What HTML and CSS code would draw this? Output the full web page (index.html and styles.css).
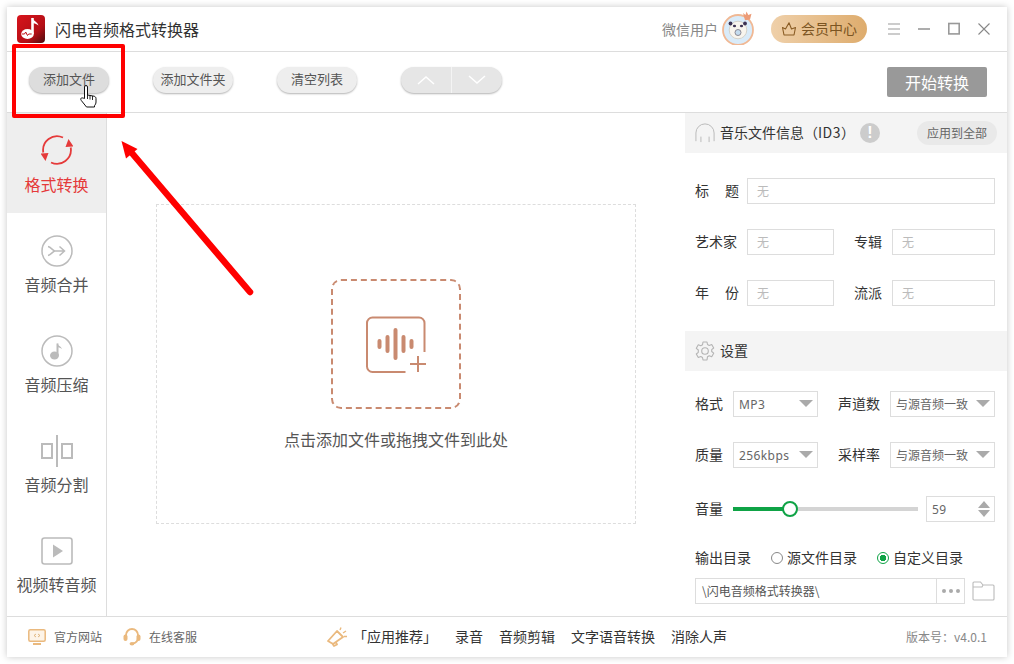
FILE: index.html
```html
<!DOCTYPE html>
<html lang="zh-CN">
<head>
<meta charset="utf-8">
<title>闪电音频格式转换器</title>
<link rel="stylesheet" href="styles.css">
</head>
<body>
<div class="window">
  <header class="titlebar">
    <svg class="logo" viewBox="0 0 28 28">
      <defs><linearGradient id="lg" x1="0" y1="0" x2="1" y2="1"><stop offset="0" stop-color="#d8141c"/><stop offset=".65" stop-color="#b40f16"/><stop offset="1" stop-color="#4a0b0e"/></linearGradient></defs>
      <rect width="28" height="28" rx="4" fill="url(#lg)"/>
      <path d="M15.500 3v16" stroke="#fff" stroke-width="2.600" fill="none"/>
      <path d="M15 2.500c1 3.500 5.500 4 6.500 8-2-1.500-4-2.500-6.500-2.500z" fill="#fff"/>
      <ellipse cx="10.500" cy="19" rx="6.300" ry="5" fill="#fff"/>
      <path d="M5 19h2.500l1.200-2 1.800 3.500 1.200-1.500h3" stroke="#c0121a" stroke-width="1" fill="none"/>
    </svg>
    <h1 class="app-title">闪电音频格式转换器</h1>
    <span class="user-name">微信用户</span>
    <svg class="avatar" viewBox="0 0 34 34">
      <circle cx="16" cy="19" r="15" fill="#d9ebf9" stroke="#f0b894" stroke-width="1.800"/>
      <circle cx="16" cy="19" r="8.800" fill="#f8f5ee" stroke="#cfcabf" stroke-width=".8"/>
      <circle cx="16" cy="21.500" r="3" fill="#c4dcef" stroke="#8d8a94"/>
      <circle cx="8.500" cy="12.500" r="1.900" fill="#3d3353"/>
      <circle cx="23" cy="12.500" r="1.900" fill="#3d3353"/>
      <ellipse cx="12.500" cy="15" rx="1.600" ry="1.200" fill="#3d3353"/>
      <ellipse cx="19.500" cy="15" rx="1.600" ry="1.200" fill="#3d3353"/>
      <path d="M21 2l2.500 2 1-3.500 1.800 3.500 3.200-1.200-1.500 5.700-5 .8z" fill="#ec9c78"/>
    </svg>
    <button class="vip-pill">
      <svg class="vip-icon" viewBox="0 0 16 16"><path d="M1.500 6.500l3 1.500L8 1.800l2.500 6.200 4-1.500-1.500 7.500H3z" fill="none" stroke="#8a5c24" stroke-width="1.100" stroke-linejoin="round"/></svg>
      会员中心
    </button>
    <div class="win-controls">
      <svg class="win-icon" viewBox="0 0 14 14"><path d="M1 2h12M1 7h12M1 12h12" stroke="#999" stroke-width="1.200"/></svg>
      <svg class="win-icon" viewBox="0 0 14 14"><path d="M1 7h12" stroke="#777" stroke-width="1.200"/></svg>
      <svg class="win-icon" viewBox="0 0 14 14"><rect x="1.800" y="1.500" width="10.400" height="10.400" fill="none" stroke="#999" stroke-width="1.600"/></svg>
      <svg class="win-icon" viewBox="0 0 14 14"><path d="M1.500 1.500l11 11M12.500 1.500l-11 11" stroke="#888" stroke-width="1.100"/></svg>
    </div>
  </header>

  <div class="toolbar">
    <button class="tool-btn is-hover">添加文件</button>
    <button class="tool-btn">添加文件夹</button>
    <button class="tool-btn">清空列表</button>
    <div class="order-group">
      <span class="order-cell"><svg class="chev" viewBox="0 0 20 10"><path d="M2 9l8-7 8 7" fill="none" stroke="#fff" stroke-width="1.500"/></svg></span>
      <span class="order-cell"><svg class="chev" viewBox="0 0 20 10"><path d="M2 1l8 7 8-7" fill="none" stroke="#fff" stroke-width="1.500"/></svg></span>
    </div>
    <button class="start-btn">开始转换</button>
  </div>

  <div class="main">
    <nav class="sidebar">
      <div class="nav-item is-active">
        <svg class="nav-icon" viewBox="0 0 32 32">
          <path d="M22 2.500A14 14 0 0 0 2.300 17.500M10 27.500A14 14 0 0 0 29.700 12.500" fill="none" stroke="#e53a3a" stroke-width="1.800"/>
          <path d="M24.500 12l8-.5-5-7.500zM7.500 18l-8 .5 5 7.500z" fill="#e53a3a"/>
        </svg>
        <span class="nav-label">格式转换</span>
      </div>
      <div class="nav-item">
        <svg class="nav-icon" viewBox="0 0 32 32"><circle cx="16" cy="16" r="15" fill="none" stroke="#bbb" stroke-width="1.500"/><path d="M7 11.500C10 12 12 16 14 16M7 20.500C10 20 12 16 14 16H23.500M18.500 11.500L23.500 16l-5 4.500" fill="none" stroke="#bbb" stroke-width="1.500"/></svg>
        <span class="nav-label">音频合并</span>
      </div>
      <div class="nav-item">
        <svg class="nav-icon" viewBox="0 0 32 32"><circle cx="16" cy="16" r="15" fill="none" stroke="#bbb" stroke-width="1.500"/><ellipse cx="13.500" cy="20.500" rx="4.500" ry="4" fill="#bbb"/><path d="M16.500 20V8.500" stroke="#bbb" stroke-width="2"/><path d="M16 8c1 3 4 3 5 6-1.500-1-3-2-5-2z" fill="#bbb"/></svg>
        <span class="nav-label">音频压缩</span>
      </div>
      <div class="nav-item">
        <svg class="nav-icon" viewBox="0 0 32 32"><path d="M16 0v32" stroke="#bbb" stroke-width="2"/><rect x="1" y="9" width="10" height="14" fill="none" stroke="#bbb" stroke-width="2"/><rect x="21" y="9" width="10" height="14" fill="none" stroke="#bbb" stroke-width="2"/></svg>
        <span class="nav-label">音频分割</span>
      </div>
      <div class="nav-item">
        <svg class="nav-icon" viewBox="0 0 32 32"><rect x="1" y="3" width="30" height="26" rx="2.500" fill="none" stroke="#bbb" stroke-width="1.600"/><path d="M12 9.500l10 6.500-10 6.500z" fill="#bbb"/></svg>
        <span class="nav-label">视频转音频</span>
      </div>
    </nav>

    <section class="workspace">
      <div class="dropzone">
        <div class="drop-target">
          <svg class="drop-icon" viewBox="0 0 62 58">
            <path d="M59.500 36V7A5.500 5.500 0 0 0 54 1.500H7.500A5.500 5.500 0 0 0 2 7v43.500A5.500 5.500 0 0 0 7.500 56H40.500" fill="none" stroke="#c98a70" stroke-width="2"/>
            <path d="M53 40v16M45 48h16" stroke="#c98a70" stroke-width="2"/>
            <path d="M14.500 25v6M22.500 21v14M30.500 14v28M38.500 21v14M46.500 25v6" stroke="#c98a70" stroke-width="4" stroke-linecap="round"/>
          </svg>
        </div>
        <p class="drop-text">点击添加文件或拖拽文件到此处</p>
      </div>
    </section>

    <aside class="panel">
      <div class="panel-head">
        <svg class="head-icon" viewBox="0 0 22 22"><path d="M1 20v-9a10 10 0 0 1 20 0v9M6.500 15v6M15.500 15v6" fill="none" stroke="#bbb" stroke-width="1.100"/></svg>
        <span class="head-title">音乐文件信息（<span class="id-tag">ID3</span>）</span>
        <span class="info-badge">!</span>
        <button class="apply-btn">应用到全部</button>
      </div>
      <div class="fields">
        <div class="row">
          <label class="lbl lbl-spread"><span>标</span><span>题</span></label>
          <div class="box box-fill box-hint">无</div>
        </div>
        <div class="row">
          <label class="lbl lbl-wide">艺术家</label>
          <div class="box box-meta box-hint">无</div>
          <label class="lbl lbl-second">专辑</label>
          <div class="box box-fill box-hint">无</div>
        </div>
        <div class="row">
          <label class="lbl lbl-spread"><span>年</span><span>份</span></label>
          <div class="box box-meta box-hint">无</div>
          <label class="lbl lbl-second">流派</label>
          <div class="box box-fill box-hint">无</div>
        </div>
      </div>
      <div class="panel-head">
        <svg class="head-icon" viewBox="0 0 20 20"><path d="M8 1h4l.5 2.500 1.700.9 2.500-.9 2 3.500-2 1.700v1.800l2 1.700-2 3.500-2.500-.9-1.700.9L12 19H8l-.5-2.500-1.700-.9-2.500.9-2-3.500 2-1.700V9L1.300 7.300l2-3.500 2.500.9 1.700-.9z" fill="none" stroke="#b4b4b4" stroke-width="1.100" stroke-linejoin="round"/><circle cx="10" cy="10" r="3.300" fill="none" stroke="#b4b4b4" stroke-width="1.100"/></svg>
        <span class="head-title">设置</span>
      </div>
      <div class="settings">
        <div class="row">
          <label class="lbl">格式</label>
          <div class="box box-select"><span class="val-latin">MP3</span><i class="caret"></i></div>
          <label class="lbl lbl-third">声道数</label>
          <div class="box box-select box-select-wide">与源音频一致<i class="caret"></i></div>
        </div>
        <div class="row">
          <label class="lbl">质量</label>
          <div class="box box-select"><span class="val-latin">256kbps</span><i class="caret"></i></div>
          <label class="lbl lbl-third">采样率</label>
          <div class="box box-select box-select-wide">与源音频一致<i class="caret"></i></div>
        </div>
        <div class="row row-volume">
          <label class="lbl">音量</label>
          <div class="slider"><div class="slider-fill"></div><div class="slider-thumb"></div></div>
          <div class="box box-number"><span class="val-latin">59</span>
            <span class="stepper"><i class="step-up"></i><i class="step-down"></i></span>
          </div>
        </div>
        <div class="row-output">
          <label class="lbl lbl-out">输出目录</label>
          <span class="radio"></span><span class="radio-text">源文件目录</span>
          <span class="radio radio-on"></span><span class="radio-text">自定义目录</span>
        </div>
        <div class="row-path">
          <div class="path-box"><span class="path-text">\闪电音频格式转换器\</span><span class="path-more"><i></i><i></i><i></i></span></div>
          <svg class="folder" viewBox="0 0 23 20"><path d="M1 18V2a1 1 0 0 1 1-1h6.500l2.500 3h10a1 1 0 0 1 1 1v13a1 1 0 0 1-1 1H2a1 1 0 0 1-1-1zM1 6h9l1-2" fill="none" stroke="#bbb" stroke-width="1.100"/></svg>
        </div>
      </div>
    </aside>
  </div>

  <footer class="footer">
    <svg class="foot-icon site" viewBox="0 0 18 16"><rect x=".8" y=".8" width="16.400" height="11.400" rx="1.500" fill="#fdf4e8" stroke="#eab97e" stroke-width="1.500"/><path d="M5 15h8" stroke="#eab97e" stroke-width="2"/><path d="M8 5L6 6.500 8 8M10 5l2 1.500L10 8" fill="none" stroke="#d9a868" stroke-width=".8"/></svg>
    <span class="foot-link">官方网站</span>
    <svg class="foot-icon support" viewBox="0 0 18 18"><path d="M3 9V7a6 6 0 0 1 12 0v2c0 4-2 6-5 6.500" fill="none" stroke="#eab97e" stroke-width="1.800"/><rect x=".5" y="6.500" width="4" height="6.500" rx="2" fill="#eab97e"/><rect x="13.500" y="6.500" width="4" height="6.500" rx="2" fill="#eab97e"/><ellipse cx="9" cy="15.800" rx="2.400" ry="1.700" fill="#eab97e"/></svg>
    <span class="foot-link">在线客服</span>
    <svg class="foot-icon horn" viewBox="0 0 20 20"><path d="M1 14L10 4l6 6-10 7zM5 16l2 3 3-1.500-1.500-3" fill="none" stroke="#eab97e" stroke-width="1.800" stroke-linejoin="round"/><path d="M13 3l1-2.500M16 6l3-2M17 9.500h3" stroke="#eab97e" stroke-width="1.400"/></svg>
    <span class="foot-rec">「应用推荐」</span>
    <span class="foot-app">录音</span>
    <span class="foot-app">音频剪辑</span>
    <span class="foot-app">文字语音转换</span>
    <span class="foot-app">消除人声</span>
    <span class="version">版本号：v4.0.1</span>
  </footer>
</div>

<div class="mark-box"></div>
<svg class="mark-arrow" viewBox="0 0 140 165"><path d="M129 152L10 12" stroke="#f00" stroke-width="6.500" stroke-linecap="round"/><path d="M.5 1L5 18.500 16.500 9z" fill="#f00"/></svg>
<svg class="mark-cursor" viewBox="0 0 17 23"><path d="M4.500 13.500V2a1.500 1.500 0 0 1 3 0v8l6.500 1.200c1.200.2 2 1.100 2 2.300V17c0 1.500-.7 2.700-1.500 3.700V22H6.500L1.300 15.500c-.7-.9-.7-1.900-.1-2.400.8-.6 2.300.1 3.300.4z" fill="#fff" stroke="#111" stroke-width="1"/><path d="M7.500 10v4M10 10.500v4M12.500 11v4" stroke="#111" stroke-width=".9"/></svg>
</body>
</html>
```
FILE: styles.css
```css
* { box-sizing: border-box; }
html, body { margin: 0; height: 100%; }
body {
  background: #fff;
  font-family: "Noto Sans CJK SC", "Noto Sans", sans-serif;
  color: #333;
  overflow: hidden;
}
button { font-family: inherit; border: 0; padding: 0; }
h1, p { margin: 0; font-weight: 400; }

.window {
  width: 1000px;
  height: 650px;
  margin: 7px;
  display: flex;
  flex-direction: column;
  background: #fff;
  box-shadow: 0 0 7px rgba(0, 0, 0, .22);
}

/* title bar */
.titlebar {
  height: 45px;
  flex: none;
  display: flex;
  align-items: center;
  padding: 0 0 0 10px;
  border-bottom: 1px solid #ddd;
}
.logo { width: 28px; height: 28px; flex: none; }
.app-title { margin-left: 10px; font-size: 16px; color: #333; line-height: 22px; }
.user-name { margin-left: auto; font-size: 14px; color: #888; padding-bottom: 1px; }
.avatar { width: 34px; height: 34px; margin: -2px 1px 0 4px; flex: none; }
.vip-pill {
  width: 96px;
  height: 28px;
  margin-left: 14px;
  padding-bottom: 2px;
  border-radius: 14px;
  background: linear-gradient(90deg, #efd0aa, #deac6d);
  color: #7c5522;
  font-size: 14px;
  display: flex;
  align-items: center;
  justify-content: center;
  gap: 4px;
}
.vip-icon { width: 16px; height: 16px; margin-top: 2px; }
.win-controls { display: flex; gap: 16px; margin: 0 16px 0 20px; }
.win-icon { width: 14px; height: 14px; display: block; }

/* toolbar */
.toolbar {
  height: 61px;
  flex: none;
  display: flex;
  align-items: flex-start;
  padding: 15px 20px 0 22px;
  gap: 44px;
  border-bottom: 1px solid #ddd;
}
.tool-btn {
  width: 80px;
  height: 26px;
  padding-bottom: 4px;
  border-radius: 13px;
  background: #eee;
  box-shadow: 0 1px 2px rgba(0, 0, 0, .3);
  color: #555;
  font-size: 13px;
}
.tool-btn.is-hover { background: #ddd; }
.order-group {
  width: 101px;
  height: 26px;
  display: flex;
  border-radius: 13px;
  background: #e6e6e6;
  box-shadow: 0 1px 2px rgba(0, 0, 0, .3);
}
.order-cell { flex: 1; display: flex; align-items: center; justify-content: center; }
.order-cell + .order-cell { border-left: 1px solid #f4f4f4; }
.chev { width: 20px; height: 10px; }
.start-btn {
  margin-left: auto;
  width: 100px;
  height: 30px;
  border-radius: 2px;
  background: #999;
  color: #fff;
  font-size: 16px;
}

/* main */
.main { flex: 1; min-height: 0; display: flex; }
.sidebar { width: 100px; flex: none; border-right: 1px solid #ddd; }
.nav-item {
  height: 100px;
  padding-top: 22px;
  display: flex;
  flex-direction: column;
  align-items: center;
}
.nav-item.is-active { background: #eee; }
.nav-icon { width: 32px; height: 32px; flex: none; }
.nav-label { margin-top: 5px; font-size: 16px; line-height: 24px; color: #555; white-space: nowrap; }
.is-active .nav-label { color: #e53a3a; }

.workspace { flex: 1; display: flex; align-items: center; justify-content: center; padding-bottom: 1px; }
.dropzone {
  width: 480px;
  height: 320px;
  border: 1px dashed #ddd;
  padding-top: 2px;
  display: flex;
  flex-direction: column;
  align-items: center;
  justify-content: center;
}
.drop-target {
  width: 130px;
  height: 130px;
  border: 2px dashed #c98a70;
  border-radius: 10px;
  display: flex;
  align-items: center;
  justify-content: center;
}
.drop-icon { width: 62px; height: 58px; margin-top: 2px; }
.drop-text { margin: 19px 0 1px; font-size: 16px; line-height: 22px; color: #555; }

/* right panel */
.panel { width: 322px; flex: none; }
.panel-head {
  height: 40px;
  padding: 0 10px;
  background: #f4f4f4;
  display: flex;
  align-items: center;
}
.head-icon { width: 20px; height: 20px; flex: none; }
.head-title { margin: 0 0 2px 5px; font-size: 14px; color: #333; }
.id-tag { letter-spacing: .5px; }
.info-badge {
  width: 20px;
  height: 20px;
  margin-left: 5px;
  border-radius: 50%;
  background: #ccc;
  color: #fff;
  font: 700 16px/20px "Liberation Sans", sans-serif;
  text-align: center;
}
.apply-btn {
  margin-left: auto;
  width: 80px;
  height: 24px;
  padding-bottom: 2px;
  border-radius: 12px;
  background: #e9e9e9;
  color: #666;
  font-size: 12px;
}
.fields { padding: 25px 12px 25px 10px; display: flex; flex-direction: column; gap: 25px; }
.settings { padding: 20px 12px 0 10px; display: flex; flex-direction: column; }
.settings .row + .row { margin-top: 25px; }
.settings .row + .row-volume { margin-top: 28px; }
.row { display: flex; align-items: center; height: 26px; }
.lbl { font-size: 14px; line-height: 20px; color: #333; width: 28px; flex: none; white-space: nowrap; margin-bottom: 2px; }
.lbl-spread { width: 44px; display: flex; justify-content: space-between; margin-right: 8px; }
.lbl-wide { width: 44px; margin-right: 8px; }
.lbl-second { margin: 0 10px 2px 20px; }
.lbl-third { width: 42px; margin: 0 10px 2px 20px; }
.box {
  height: 26px;
  border: 1px solid #ddd;
  font-size: 12px;
  display: flex;
  align-items: center;
  padding: 0 0 2px 9px;
  color: #666;
  white-space: nowrap;
}
.box-fill { flex: 1; }
.box-meta { width: 87px; flex: none; }
.box-hint { color: #bbb; }
.box-select { width: 85px; margin-left: 10px; padding-left: 5px; position: relative; flex: none; }
.box-select-wide { width: 105px; margin-left: 0; }
.val-latin { font-family: "Noto Sans", sans-serif; letter-spacing: .4px; margin-top: 2px; }
.caret {
  margin-left: auto;
  margin-right: 4px;
  border-left: 7px solid transparent;
  border-right: 7px solid transparent;
  border-top: 7px solid #aaa;
}
.slider { position: relative; width: 185px; height: 4px; margin-left: 10px; background: #d4d4d4; flex: none; }
.slider-fill { width: 57px; height: 100%; background: #0fa346; }
.slider-thumb {
  position: absolute;
  left: 49px;
  top: -6px;
  width: 16px;
  height: 16px;
  border: 2px solid #0fa346;
  border-radius: 50%;
  background: #fff;
}
.box-number { width: 69px; margin-left: 8px; padding: 0 0 0 5px; flex: none; }
.box-number .val-latin { margin-top: 0; }
.stepper { margin-left: auto; margin-right: 4px; display: flex; flex-direction: column; gap: 2px; }
.step-up { border: 6px solid transparent; border-top: 0; border-bottom: 7px solid #aaa; }
.step-down { border: 6px solid transparent; border-bottom: 0; border-top: 7px solid #aaa; }
.row-output { display: flex; align-items: center; height: 20px; margin-top: 26px; font-size: 14px; color: #333; }
.lbl-out { width: 56px; margin-right: 20px; }
.radio {
  width: 12px;
  height: 12px;
  flex: none;
  border: 1px solid #888;
  border-radius: 50%;
  background: #fff;
}
.radio-on { margin-left: 20px; border-color: #0fa346; background: radial-gradient(circle, #0fa346 0 3px, #fff 3.500px); }
.radio-text { margin: 0 0 2px 4px; }
.row-path { display: flex; align-items: center; margin-top: 10px; }
.path-box { width: 270px; height: 26px; border: 1px solid #ddd; display: flex; align-items: center; flex: none; }
.path-text { flex: 1; padding: 0 0 2px 6px; font-size: 12px; color: #555; white-space: nowrap; }
.path-more {
  width: 28px;
  height: 100%;
  border-left: 1px solid #ddd;
  display: flex;
  align-items: center;
  justify-content: center;
  gap: 3px;
}
.path-more i { width: 4px; height: 4px; border-radius: 50%; background: #aaa; }
.folder { width: 23px; height: 20px; margin-left: 7px; }

/* footer */
.footer {
  height: 41px;
  flex: none;
  border-top: 1px solid #ddd;
  display: flex;
  align-items: center;
  padding: 0 20px 0 21px;
  font-size: 12px;
}
.foot-icon { flex: none; }
.foot-icon.site { width: 18px; height: 16px; }
.foot-icon.support { width: 18px; height: 18px; margin-left: 21px; }
.foot-icon.horn { width: 20px; height: 20px; margin-left: 130px; }
.foot-link { margin: 0 0 2px 8px; color: #666; }
.foot-rec { width: 84px; margin: 0 0 2px 6px; font-size: 14px; color: #333; white-space: nowrap; }
.foot-app { margin: 0 0 2px 16px; font-size: 14px; color: #333; white-space: nowrap; }
.foot-rec + .foot-app { margin-left: 18px; }
.version { margin: 0 0 2px auto; color: #888; }

/* annotations drawn over the screenshot */
.mark-box {
  position: absolute;
  left: 12px;
  top: 44px;
  width: 113px;
  height: 74px;
  border: 4px solid #f00;
  border-radius: 2px;
}
.mark-arrow { position: absolute; left: 121px; top: 140px; width: 140px; height: 165px; }
.mark-cursor { position: absolute; left: 80px; top: 85px; width: 17px; height: 23px; }
```
